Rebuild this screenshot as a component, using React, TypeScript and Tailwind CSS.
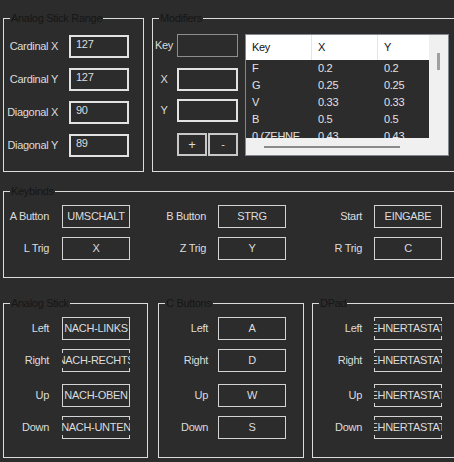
import React from "react";

const bg = "bg-[#2c2c2c]";

function Group({
  title,
  className,
  children,
}: {
  title: string;
  className: string;
  children: React.ReactNode;
}) {
  return (
    <div className={`relative shrink-0 border border-[#dcdcdc] ${className}`}>
      <span className={`absolute left-[6px] -top-[8px] px-[1px] leading-[14px] text-[#161616] ${bg}`}>
        {title}
      </span>
      {children}
    </div>
  );
}

function BindBox({ text }: { text: string }) {
  return (
    <div className="flex h-[23px] w-[68px] shrink-0 items-center justify-center overflow-hidden shadow-[inset_0_0_0_1px_#d4d4d4]">
      <span className={`shrink-0 whitespace-nowrap leading-[15px] ${bg}`}>{text}</span>
    </div>
  );
}

function BindRow({
  label,
  value,
  labelW,
  gap,
  className = "",
}: {
  label: string;
  value: string;
  labelW: string;
  gap: string;
  className?: string;
}) {
  return (
    <div className={`flex items-center ${className}`}>
      <div className={`${labelW} text-right`}>{label}</div>
      <div className={gap}>
        <BindBox text={value} />
      </div>
    </div>
  );
}

function RangeRow({ label, value }: { label: string; value: string }) {
  return (
    <div className="flex items-center">
      <div className="w-[54px] text-right">{label}</div>
      <div className="ml-[11px] h-[23px] w-[60px] border-2 border-[#e2e2e2] pl-[5px] leading-[15px]">
        {value}
      </div>
    </div>
  );
}

const modifiers = [
  { key: "F", x: "0.2", y: "0.2" },
  { key: "G", x: "0.25", y: "0.25" },
  { key: "V", x: "0.33", y: "0.33" },
  { key: "B", x: "0.5", y: "0.5" },
  { key: "0 (ZEHNERTASTATUR)", x: "0.43", y: "0.43" },
];

function ModList() {
  return (
    <div className="ml-[7px] mt-[15px] flex h-[122px] w-[204px] shrink-0 border border-[#828790] bg-[#f0f0f0]">
      <div className="flex w-[183px] flex-col">
        <div className="flex h-[25px] shrink-0 bg-white text-[#111]">
          <div className="flex w-[66px] items-center border-r border-[#e5e5e5] pl-[6px]">Key</div>
          <div className="flex w-[66px] items-center border-r border-[#e5e5e5] pl-[6px]">X</div>
          <div className="flex flex-1 items-center pl-[6px]">Y</div>
        </div>
        <div className={`h-[78px] shrink-0 overflow-hidden ${bg}`}>
          {modifiers.map((m) => (
            <div key={m.key} className="flex h-[17px] items-center text-[#e2e2e2]">
              <div className="w-[66px] truncate pl-[6px]">{m.key}</div>
              <div className="w-[66px] pl-[6px]">{m.x}</div>
              <div className="flex-1 pl-[6px]">{m.y}</div>
            </div>
          ))}
        </div>
        <div className="h-[17px] shrink-0 pl-[18px] pt-[8px]">
          <div className="h-[2px] w-[136px] bg-[#8a8a8a]" />
        </div>
      </div>
      <div className="flex-1 pt-[18px]">
        <div className="mx-auto h-[17px] w-[3px] bg-[#a0a0a0]" />
      </div>
    </div>
  );
}

export default function App() {
  return (
    <div
      className={`h-[462px] w-[454px] overflow-hidden ${bg} text-[11px] tracking-[-0.3px] text-[#dcdcdc]`}
      style={{ fontFamily: '"Liberation Sans", Arial, sans-serif' }}
    >
      <div className="flex gap-[8px] pl-[3px] pt-[18px]">
        <Group title="Analog Stick Range" className="h-[154px] w-[141px]">
          <div className="flex flex-col gap-[10px] pt-[16px]">
            <RangeRow label="Cardinal X" value="127" />
            <RangeRow label="Cardinal Y" value="127" />
            <RangeRow label="Diagonal X" value="90" />
            <RangeRow label="Diagonal Y" value="89" />
          </div>
        </Group>

        <Group title="Modifiers" className="flex h-[154px] w-[330px] items-start">
          <div className="w-[85px] shrink-0 pt-[15px]">
            <div className="flex items-center">
              <div className="ml-[1px] w-[20px] text-center">Key</div>
              <div className="ml-[3px] h-[23px] w-[61px] border border-[#8e8e8e]" />
            </div>
            <div className="mt-[11px] flex items-center">
              <div className="ml-[1px] w-[20px] text-center">X</div>
              <div className="ml-[3px] h-[23px] w-[61px] border-2 border-[#e2e2e2]" />
            </div>
            <div className="mt-[8px] flex items-center">
              <div className="ml-[1px] w-[20px] text-center">Y</div>
              <div className="ml-[3px] h-[23px] w-[61px] border-2 border-[#e2e2e2]" />
            </div>
            <div className="ml-[24px] mt-[11px] flex gap-[1px]">
              <button className="h-[23px] w-[30px] border-2 border-[#c8c8c8] leading-none text-[13px]">+</button>
              <button className="h-[23px] w-[30px] border-2 border-[#c8c8c8] leading-none">-</button>
            </div>
          </div>
          <ModList />
        </Group>
      </div>

      <div className="pl-[3px] pt-[19px]">
        <Group title="Keybinds" className="h-[87px] w-[470px]">
          <div className="flex flex-col gap-[9px] pt-[13px]">
            <div className="flex items-center">
              <BindRow label="A Button" value="UMSCHALT" labelW="w-[45px]" gap="ml-[13px]" />
              <BindRow label="B Button" value="STRG" labelW="w-[76px]" gap="ml-[12px]" />
              <BindRow label="Start" value="EINGABE" labelW="w-[76px]" gap="ml-[12px]" />
            </div>
            <div className="flex items-center">
              <BindRow label="L Trig" value="X" labelW="w-[45px]" gap="ml-[13px]" />
              <BindRow label="Z Trig" value="Y" labelW="w-[76px]" gap="ml-[12px]" />
              <BindRow label="R Trig" value="C" labelW="w-[76px]" gap="ml-[12px]" />
            </div>
          </div>
        </Group>
      </div>

      <div className="flex pl-[3px] pt-[25px]">
        <Group title="Analog Stick" className="h-[155px] w-[145px]">
          <div className="pt-[13px]">
            <BindRow label="Left" value="NACH-LINKS" labelW="w-[45px]" gap="ml-[13px]" />
            <BindRow label="Right" value="NACH-RECHTS" labelW="w-[45px]" gap="ml-[13px]" className="mt-[9px]" />
            <BindRow label="Up" value="NACH-OBEN" labelW="w-[45px]" gap="ml-[13px]" className="mt-[12px]" />
            <BindRow label="Down" value="NACH-UNTEN" labelW="w-[45px]" gap="ml-[13px]" className="mt-[9px]" />
          </div>
        </Group>
        <Group title="C Buttons" className="ml-[10px] h-[155px] w-[146px]">
          <div className="pt-[13px]">
            <BindRow label="Left" value="A" labelW="w-[49px]" gap="ml-[10px]" />
            <BindRow label="Right" value="D" labelW="w-[49px]" gap="ml-[10px]" className="mt-[9px]" />
            <BindRow label="Up" value="W" labelW="w-[49px]" gap="ml-[10px]" className="mt-[12px]" />
            <BindRow label="Down" value="S" labelW="w-[49px]" gap="ml-[10px]" className="mt-[9px]" />
          </div>
        </Group>
        <Group title="DPad" className="ml-[8px] h-[155px] w-[160px]">
          <div className="pt-[13px]">
            <BindRow label="Left" value="4 (ZEHNERTASTATUR)" labelW="w-[49px]" gap="ml-[12px]" />
            <BindRow label="Right" value="6 (ZEHNERTASTATUR)" labelW="w-[49px]" gap="ml-[12px]" className="mt-[9px]" />
            <BindRow label="Up" value="8 (ZEHNERTASTATUR)" labelW="w-[49px]" gap="ml-[12px]" className="mt-[12px]" />
            <BindRow label="Down" value="2 (ZEHNERTASTATUR)" labelW="w-[49px]" gap="ml-[12px]" className="mt-[9px]" />
          </div>
        </Group>
      </div>
    </div>
  );
}
